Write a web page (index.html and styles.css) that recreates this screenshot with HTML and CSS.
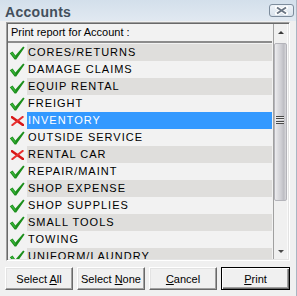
FILE: index.html
```html
<!DOCTYPE html>
<html>
<head>
<meta charset="utf-8">
<link rel="stylesheet" href="styles.css">
</head>
<body>
<svg class="defs" width="0" height="0">
  <defs>
    <symbol id="chk" viewBox="0 0 16 14">
      <path d="M0.8,7.2 L3.6,5.6 L6.4,9.6 L14.2,0.4 L15.6,1.4 L7.2,13.4 L5.6,13.4 Z" fill="#1c8f1c"/>
      <path d="M1.8,7.2 L3.4,6.4 L6.4,10.8 L6.2,12.2 Z" fill="#39b339"/>
    </symbol>
    <symbol id="xx" viewBox="0 0 13 10">
      <path d="M1,1.2 L12,9" stroke="#d81818" stroke-width="2.6" stroke-linecap="round"/>
      <path d="M11.6,1 L1.4,9" stroke="#e83030" stroke-width="2.2" stroke-linecap="round"/>
    </symbol>
  </defs>
</svg>
<div class="window">
  <div class="titlebar">
    <span class="title">Accounts</span>
    <div class="close">
      <svg width="13" height="9" viewBox="0 0 13 9">
        <path d="M2,1.5 L11,7.5 M11,1.5 L2,7.5" stroke="#ffffff" stroke-width="4" stroke-linecap="round"/>
        <path d="M2,1.5 L11,7.5 M11,1.5 L2,7.5" stroke="#6b7684" stroke-width="2"/>
      </svg>
    </div>
  </div>
  <div class="client">
    <div class="listbox">
      <div class="listmain">
        <div class="header">Print report for Account :</div>
        <div class="rows">
          <div class="row alt"><span class="ico"><svg class="ck"><use href="#chk"/></svg></span><span class="label">CORES/RETURNS</span></div>
          <div class="row"><span class="ico"><svg class="ck"><use href="#chk"/></svg></span><span class="label">DAMAGE CLAIMS</span></div>
          <div class="row alt"><span class="ico"><svg class="ck"><use href="#chk"/></svg></span><span class="label">EQUIP RENTAL</span></div>
          <div class="row"><span class="ico"><svg class="ck"><use href="#chk"/></svg></span><span class="label">FREIGHT</span></div>
          <div class="row sel"><span class="ico"><svg class="xm"><use href="#xx"/></svg></span><span class="label">INVENTORY</span></div>
          <div class="row"><span class="ico"><svg class="ck"><use href="#chk"/></svg></span><span class="label">OUTSIDE SERVICE</span></div>
          <div class="row alt"><span class="ico"><svg class="xm"><use href="#xx"/></svg></span><span class="label">RENTAL CAR</span></div>
          <div class="row"><span class="ico"><svg class="ck"><use href="#chk"/></svg></span><span class="label">REPAIR/MAINT</span></div>
          <div class="row alt"><span class="ico"><svg class="ck"><use href="#chk"/></svg></span><span class="label">SHOP EXPENSE</span></div>
          <div class="row"><span class="ico"><svg class="ck"><use href="#chk"/></svg></span><span class="label">SHOP SUPPLIES</span></div>
          <div class="row alt"><span class="ico"><svg class="ck"><use href="#chk"/></svg></span><span class="label">SMALL TOOLS</span></div>
          <div class="row"><span class="ico"><svg class="ck"><use href="#chk"/></svg></span><span class="label">TOWING</span></div>
          <div class="row alt"><span class="ico"><svg class="ck"><use href="#chk"/></svg></span><span class="label">UNIFORM/LAUNDRY</span></div>
        </div>
      </div>
      <div class="scrollbar">
        <div class="sb-btn"><span class="arrow-up"></span></div>
        <div class="thumb"><span class="grip"></span></div>
        <div class="sb-rest"></div>
        <div class="sb-btn"><span class="arrow-down"></span></div>
      </div>
    </div>
    <div class="buttons">
      <div class="btn"><span>Select <u>A</u>ll</span></div>
      <div class="btn"><span>Select <u>N</u>one</span></div>
      <div class="btn"><span><u>C</u>ancel</span></div>
      <div class="btn default"><span><u>P</u>rint</span></div>
    </div>
  </div>
</div>
</body>
</html>
```
FILE: styles.css
```css
* { box-sizing: border-box; }
html, body { margin: 0; padding: 0; }
body {
  width: 297px;
  height: 296px;
  overflow: hidden;
  font-family: "Liberation Sans", Arial, sans-serif;
  font-size: 11px;
  color: #000;
  background: #f0f0f0;
}
.defs { position: absolute; width: 0; height: 0; }
.window {
  width: 297px;
  height: 296px;
  display: flex;
  flex-direction: column;
  background: #f0f0f0;
  border-right: 1px solid #a9b5c2;
}
.titlebar {
  height: 21px;
  flex: none;
  display: flex;
  align-items: center;
  background: linear-gradient(#d3dfeb, #e1e9f1);
  padding-left: 5px;
}
.title {
  font-size: 14px;
  font-weight: bold;
  color: #434f5c;
  letter-spacing: 0.3px;
  padding-top: 2px;
}
.close {
  margin-left: auto;
  margin-right: 2px;
  width: 25px;
  height: 13px;
  border: 1px solid #7d8c9c;
  border-radius: 3px;
  background: linear-gradient(#eef3f8, #d9e2ec);
  display: flex;
  align-items: center;
  justify-content: center;
}
.client {
  flex: 1;
  display: flex;
  flex-direction: column;
  padding: 1px 0 0 5px;
}
.listbox {
  width: 284px;
  height: 239px;
  margin-left: 1px;
  display: flex;
  border: 1px solid;
  border-color: #a0a0a0 #ffffff #ffffff #a0a0a0;
  box-shadow: inset 1px 1px 0 #696969, inset -1px -1px 0 #e3e3e3;
  padding: 1px 1px 1px 1px;
  background: #f2f2f2;
}
.listmain {
  width: 265px;
  display: flex;
  flex-direction: column;
  overflow: hidden;
}
.header {
  height: 19px;
  flex: none;
  padding-left: 3px;
  line-height: 17px;
  border-bottom: 2px solid #8c8c8c;
  margin-right: 1px;
}
.rows {
  padding-top: 1px;
  display: flex;
  flex-direction: column;
}
.row {
  height: 17px;
  flex: none;
  display: flex;
}
.ico {
  width: 19px;
  flex: none;
  display: flex;
  align-items: flex-start;
}
.ck {
  width: 16px;
  height: 14px;
  margin: 2px 0 0 1px;
}
.xm {
  width: 13px;
  height: 10px;
  margin: 4px 0 0 3px;
}
.label {
  flex: 1;
  margin-right: 1px;
  padding-left: 1px;
  line-height: 17px;
  letter-spacing: 1px;
  white-space: nowrap;
}
.row.alt .label { background: #dfdedc; }
.row.sel .label { background: #3399ff; color: #fff; }
.scrollbar {
  width: 15px;
  display: flex;
  flex-direction: column;
  border-left: 1px solid #a0a0a0;
  border-right: 1px solid #fafafa;
  background: #f0f0f0;
}
.sb-btn {
  height: 17px;
  flex: none;
  display: flex;
  align-items: center;
  justify-content: center;
}
.arrow-up {
  width: 0; height: 0;
  border-left: 3.5px solid transparent;
  border-right: 3.5px solid transparent;
  border-bottom: 3px solid #3a3a3a;
  margin-top: -1px;
}
.arrow-down {
  width: 0; height: 0;
  border-left: 3px solid transparent;
  border-right: 3px solid transparent;
  border-top: 3px solid #4a4a4a;
  margin-top: 1px;
}
.thumb {
  height: 158px;
  flex: none;
  margin-top: 2px;
  border: 1px solid #b4b4ba;
  border-radius: 2px;
  background: linear-gradient(to right, #ececee 0%, #d8d8dc 35%, #cfcfd4 55%, #bdbdc3 80%, #d9d9dc 100%);
  display: flex;
  align-items: center;
  justify-content: center;
}
.grip {
  width: 8px;
  height: 8px;
  margin-left: -2px;
  margin-top: -4px;
  background: repeating-linear-gradient(#4a4a4a 0 1px, #e8e8e8 1px 2px, transparent 2px 2.33px);
}
.sb-rest { flex: 1; }
.buttons {
  margin-top: 6px;
  display: flex;
  gap: 4px;
}
.btn {
  width: 68px;
  height: 23px;
  display: flex;
  align-items: center;
  justify-content: center;
  padding-top: 1px;
  background: #f0f0f0;
  border: 1px solid;
  border-color: #ffffff #696969 #696969 #ffffff;
  box-shadow: inset -1px -1px 0 #a0a0a0, inset 1px 1px 0 #e3e3e3;
  white-space: nowrap;
}
.btn.default {
  width: 69px;
  border: 1px solid #000;
  box-shadow: inset 1px 1px 0 #ffffff, inset -1px -1px 0 #696969, inset -2px -2px 0 #a0a0a0;
}
.btn u { text-decoration: underline; text-underline-offset: 1px; }
```
